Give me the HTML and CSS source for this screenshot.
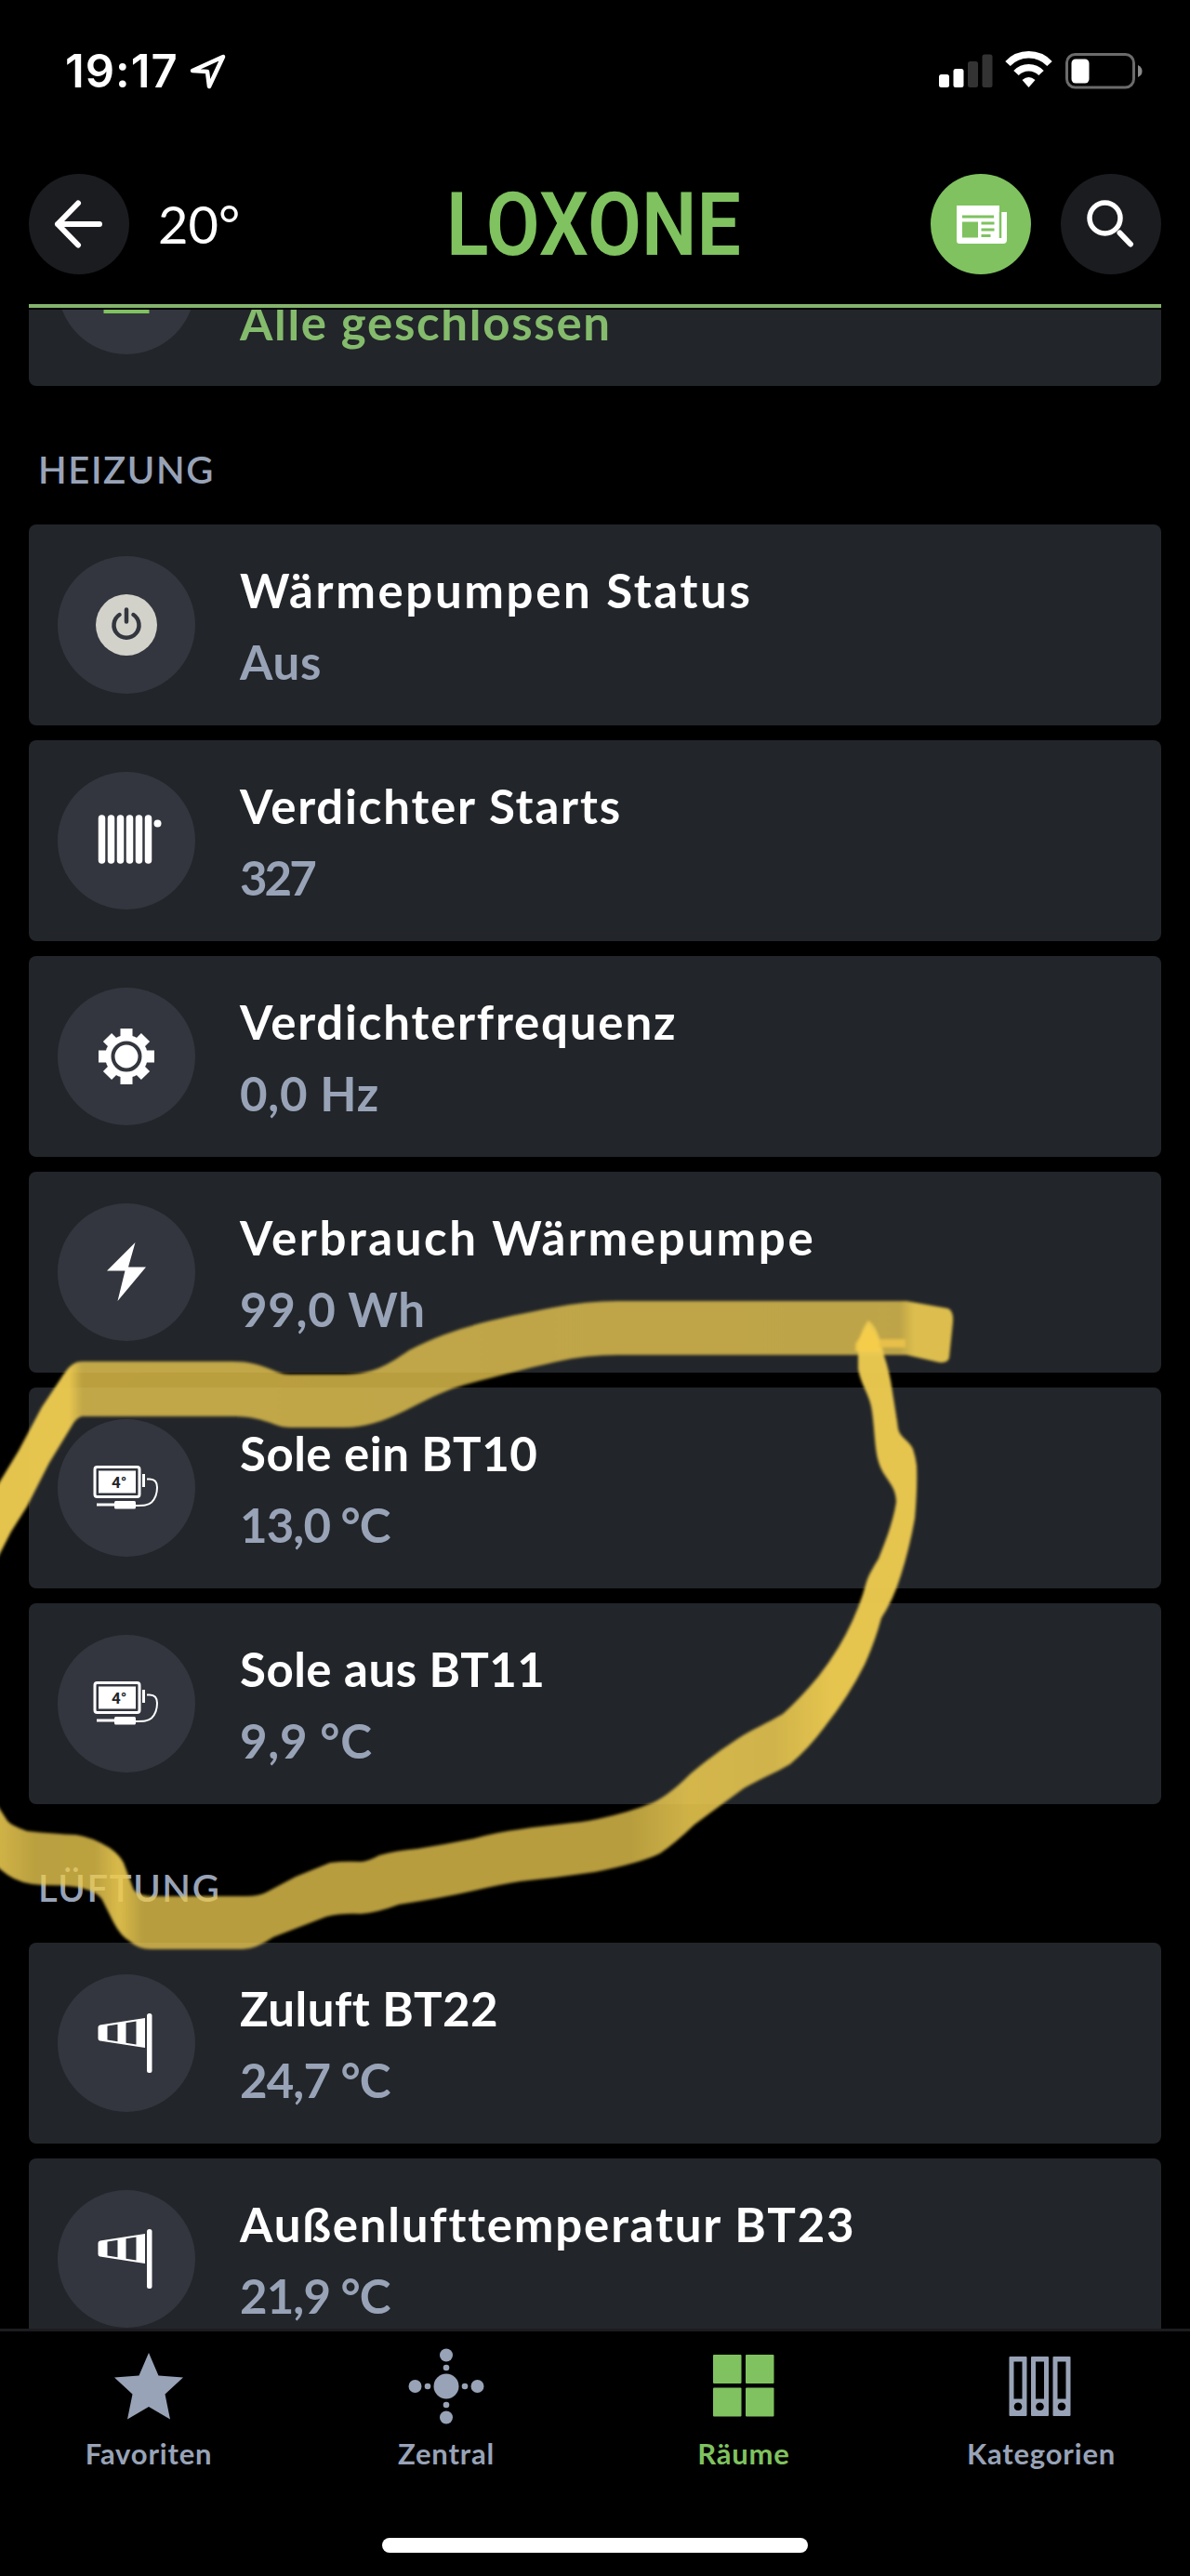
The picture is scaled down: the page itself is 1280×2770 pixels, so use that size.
FILE: index.html
```html
<!DOCTYPE html>
<html lang="de">
	<head>

		<meta charset="UTF-8">
		<title>Loxone</title>

		<link rel="stylesheet" href="styles.css">

	</head>
	<body>

		<!-- shared icons -->
		<svg class="defs">
			<symbol id="sensor" viewBox="0 0 148 148">
				<rect x="40" y="51.500" width="48" height="32" rx="2.500" fill="none" stroke="#fff" stroke-width="3"/>
				<rect x="44" y="55.500" width="40" height="24" fill="#fff"/>
				<text x="58" y="73.500" class="sensor-text">4°</text>
				<path d="M92.500 59v14" stroke="#fff" stroke-width="3"/>
				<path d="M96 64.500h3c6 0 8 4 8 9 0 7-2 12-6 16-4 3.500-8 3.500-18 3.500" fill="none" stroke="#fff" stroke-width="2"/>
				<path d="M42 92h22" stroke="#fff" stroke-width="3"/>
				<rect x="61" y="88" width="23" height="8.500" rx="1.500" fill="#fff"/>
			</symbol>
			<symbol id="windsock" viewBox="0 0 148 148">
				<path fill="#fff" fill-rule="evenodd" d="M45.500 54.500L94 47v32l-48.500-7.500q-2-.5-2-2.500V57q0-2 2-2.500zM53.500 55.500v15l11 1.800V53.700zM73.500 52.300v21.400l11 1.700V50.600z"/>
				<rect x="96" y="42" width="5.500" height="64" rx="2.500" fill="#fff"/>
			</symbol>
		</svg>

		<div class="screen">

			<div class="status-bar">
				<div class="status-left">
					<span class="time">19:17</span>
					<svg width="42" height="42" viewBox="0 0 42 42"><path d="M4 20L37 5 22 37 20 21z" fill="none" stroke="#fff" stroke-width="4.500" stroke-linejoin="round"/></svg>
				</div>
				<svg width="220" height="42" viewBox="0 0 220 42">
					<rect x="1" y="25" width="11" height="14" rx="2.500" fill="#fff"/>
					<rect x="16.500" y="19" width="11" height="20" rx="2.500" fill="#fff"/>
					<rect x="32" y="11" width="11" height="28" rx="2.500" fill="#333"/>
					<rect x="47.500" y="3.500" width="11" height="35.500" rx="2.500" fill="#333"/>
					<path d="M75 13.500a31 31 0 0 1 45 0" fill="none" stroke="#fff" stroke-width="7.500"/>
					<path d="M84 23.500a18.500 18.500 0 0 1 27 0" fill="none" stroke="#fff" stroke-width="7.500"/>
					<path d="M97.500 39l-7-8q7-6 14 0z" fill="#fff"/>
					<rect x="138.500" y="3.500" width="72" height="35.500" rx="9" fill="none" stroke="#6b6b6b" stroke-width="3"/>
					<rect x="143.500" y="8.500" width="19" height="26" rx="4.500" fill="#fff"/>
					<path d="M215 15q4.500 2 4.500 6.500t-4.500 6.500z" fill="#8a8a8a"/>
				</svg>
			</div>

			<header class="header">
				<div class="round-button">
					<svg width="108" height="108" viewBox="0 0 108 108"><path d="M76 54H31M53 31.500L31 54l22 22.500" fill="none" stroke="#fff" stroke-width="6" stroke-linecap="round" stroke-linejoin="round"/></svg>
				</div>
				<span class="temperature">20°</span>
				<svg class="logo" width="326" height="112" viewBox="0 0 326 112"><text x="2" y="89" textLength="317" lengthAdjust="spacingAndGlyphs">LOXONE</text></svg>
				<div class="round-button green">
					<svg width="108" height="108" viewBox="0 0 108 108">
						<path d="M28 34h46v7h8v30q0 4-4 4H31q-3 0-3-3z" fill="#fff"/>
						<path d="M34 46h34M54.500 53h14M54.500 60h14M54.500 66.500h10" stroke="#7fc25f" stroke-width="3"/>
						<path d="M34 51.500h17v17H34z" fill="#7fc25f"/>
						<path d="M75 41v28" stroke="#7fc25f" stroke-width="2.500"/>
					</svg>
				</div>
				<div class="round-button">
					<svg width="108" height="108" viewBox="0 0 108 108">
						<circle cx="47.500" cy="47.500" r="16.500" fill="none" stroke="#fff" stroke-width="5.500"/>
						<path d="M63.500 63.500l11.500 12" stroke="#fff" stroke-width="6" stroke-linecap="round"/>
					</svg>
				</div>
			</header>

			<main class="content">

				<div class="card cut">
					<div class="icon"><svg width="148" height="148" viewBox="0 0 148 148"><path d="M49.500 102h49" stroke="#7fc25f" stroke-width="4"/></svg></div>
					<div class="labels">
						<div class="value closed">Alle geschlossen</div>
					</div>
				</div>

				<h2>HEIZUNG</h2>

				<div class="card">
					<div class="icon"><svg width="148" height="148" viewBox="0 0 148 148">
						<circle cx="74" cy="74" r="33" fill="#d2d2cb"/>
						<path d="M66.500 63a13.500 13.500 0 1 0 15 0M74 57.500v13" fill="none" stroke="#33363e" stroke-width="4.500" stroke-linecap="round"/>
					</svg></div>
					<div class="labels">
						<div class="title wide">Wärmepumpen Status</div>
						<div class="value">Aus</div>
					</div>
				</div>

				<div class="card">
					<div class="icon"><svg width="148" height="148" viewBox="0 0 148 148">
						<path d="M47.500 50v45M57.500 50v45M67.500 50v45M77.500 50v45M87.500 50v45M97.500 50v45" stroke="#fff" stroke-width="7.500" stroke-linecap="round"/>
						<circle cx="107.500" cy="55.500" r="4" fill="#fff"/>
					</svg></div>
					<div class="labels">
						<div class="title">Verdichter Starts</div>
						<div class="value digits">327</div>
					</div>
				</div>

				<div class="card">
					<div class="icon"><svg width="148" height="148" viewBox="0 0 148 148">
						<circle cx="74" cy="74" r="23" fill="#fff"/>
						<path d="M74 44v60M44 74h60M53.500 53.500l41 41M94.500 53.500l-41 41" stroke="#fff" stroke-width="13"/>
						<circle cx="74" cy="74" r="14.500" fill="#fff" stroke="#33363e" stroke-width="4"/>
					</svg></div>
					<div class="labels">
						<div class="title">Verdichterfrequenz</div>
						<div class="value">0,0 Hz</div>
					</div>
				</div>

				<div class="card">
					<div class="icon"><svg width="148" height="148" viewBox="0 0 148 148"><path d="M83.500 42L76 68.500h19L64.500 105l8-32.500H53z" fill="#fff"/></svg></div>
					<div class="labels">
						<div class="title wide">Verbrauch Wärmepumpe</div>
						<div class="value">99,0 Wh</div>
					</div>
				</div>

				<div class="card">
					<div class="icon"><svg width="148" height="148"><use href="#sensor"/></svg></div>
					<div class="labels">
						<div class="title tight">Sole ein BT10</div>
						<div class="value narrow">13,0 °C</div>
					</div>
				</div>

				<div class="card">
					<div class="icon"><svg width="148" height="148"><use href="#sensor"/></svg></div>
					<div class="labels">
						<div class="title tight">Sole aus BT11</div>
						<div class="value">9,9 °C</div>
					</div>
				</div>

				<h2>LÜFTUNG</h2>

				<div class="card">
					<div class="icon"><svg width="148" height="148"><use href="#windsock"/></svg></div>
					<div class="labels">
						<div class="title tight">Zuluft BT22</div>
						<div class="value narrow">24,7 °C</div>
					</div>
				</div>

				<div class="card">
					<div class="icon"><svg width="148" height="148"><use href="#windsock"/></svg></div>
					<div class="labels">
						<div class="title">Außenlufttemperatur BT23</div>
						<div class="value narrow">21,9 °C</div>
					</div>
				</div>

			</main>

			<nav class="tabs">
				<div class="tab">
					<svg width="84" height="84" viewBox="0 0 84 84"><path d="M42 6l10.500 24.500L79 32.500 59.500 50.500 65 77.500 42 64 19 77.500 24.500 50.500 5 32.500l26.500-2z" fill="#98a3b7"/></svg>
					<span>Favoriten</span>
				</div>
				<div class="tab">
					<svg width="84" height="84" viewBox="0 0 84 84" fill="#98a3b7">
						<circle cx="42" cy="42" r="13.500"/>
						<circle cx="22" cy="42" r="3.300"/><circle cx="62" cy="42" r="3.300"/>
						<circle cx="42" cy="22" r="3.300"/><circle cx="42" cy="62" r="3.300"/>
						<circle cx="8.500" cy="42" r="7"/><circle cx="75.500" cy="42" r="7"/>
						<circle cx="42" cy="8.500" r="7"/><circle cx="42" cy="75.500" r="7"/>
					</svg>
					<span>Zentral</span>
				</div>
				<div class="tab active">
					<svg width="84" height="84" viewBox="0 0 84 84" fill="#7fc25f">
						<rect x="9" y="8" width="30.500" height="31" rx="1"/><rect x="44" y="8" width="30.500" height="31" rx="1"/>
						<rect x="9" y="43.500" width="30.500" height="31" rx="1"/><rect x="44" y="43.500" width="30.500" height="31" rx="1"/>
					</svg>
					<span>Räume</span>
				</div>
				<div class="tab">
					<svg width="84" height="84" viewBox="0 0 84 84" fill="#98a3b7" fill-rule="evenodd">
						<path id="binder" d="M8.500 10h17q1 0 1 1v62q0 1-1 1h-17q-1 0-1-1V11q0-1 1-1zM12.500 15.500v40h9v-40zM17 59.500a4.300 4.300 0 1 0 .01 0z"/>
						<use href="#binder" x="23.500"/>
						<use href="#binder" x="47"/>
					</svg>
					<span>Kategorien</span>
				</div>
			</nav>
			<div class="home-bar"></div>

			<!-- marker drawing over the list -->
			<svg class="marker" width="1280" height="2770" viewBox="0 0 1280 2770">
				<defs>
					<linearGradient id="upper" gradientUnits="userSpaceOnUse" x1="0" y1="0" x2="1280" y2="0">
						<stop offset="0" stop-color="#ecca50" stop-opacity=".97"/>
						<stop offset=".058" stop-color="#ecca50" stop-opacity=".97"/>
						<stop offset=".069" stop-color="#ecca50" stop-opacity=".79"/>
						<stop offset=".756" stop-color="#ecca50" stop-opacity=".77"/>
						<stop offset=".768" stop-color="#ecca50" stop-opacity=".92"/>
						<stop offset="1" stop-color="#ecca50" stop-opacity=".92"/>
					</linearGradient>
					<linearGradient id="lower" gradientUnits="userSpaceOnUse" x1="0" y1="0" x2="1280" y2="0">
						<stop offset="0" stop-color="#ecca50" stop-opacity=".88"/>
						<stop offset=".03" stop-color="#ecca50" stop-opacity=".79"/>
						<stop offset=".08" stop-color="#ecca50" stop-opacity=".8"/>
						<stop offset=".1" stop-color="#ecca50" stop-opacity=".92"/>
						<stop offset=".12" stop-color="#ecca50" stop-opacity=".78"/>
						<stop offset=".53" stop-color="#ecca50" stop-opacity=".78"/>
						<stop offset=".58" stop-color="#ecca50" stop-opacity=".88"/>
						<stop offset=".65" stop-color="#ecca50" stop-opacity=".86"/>
						<stop offset=".7" stop-color="#ecca50" stop-opacity=".97"/>
						<stop offset="1" stop-color="#ecca50" stop-opacity=".97"/>
					</linearGradient>
					<filter id="soft" x="-5%" y="-5%" width="110%" height="110%"><feGaussianBlur stdDeviation="1.500"/></filter>
				</defs>
				<g filter="url(#soft)">
					<path fill="url(#upper)" d="M-10 1610L0 1593L20 1560L45 1513L69 1477Q77 1464 88 1464H250C285 1464 295 1478 312 1478H370C405 1478 425 1462 440 1452C490 1425 550 1415 595 1406Q630 1399 665 1399H975L1020 1407Q1026 1410 1025 1422L1021 1460Q1020 1466 1010 1465L975 1457H665Q630 1457 600 1464C560 1473 530 1481 500 1489C450 1503 420 1535 370 1535H312C295 1535 285 1523 250 1523H88Q82 1525 78 1532L53 1573L29 1620L12 1647L-10 1690z"/>
					<path fill="url(#lower)" d="M934 1420Q927 1428 923 1445V1472C926 1490 936 1500 938 1518C941 1540 941 1560 945 1572C950 1590 964 1596 964 1615C960 1640 951 1660 945 1676C939 1686 935 1692 932 1701Q925 1728 910 1757Q898 1780 880 1803Q860 1827 842 1843C825 1853 810 1859 793 1870Q768 1886 743 1907Q720 1930 703 1938Q680 1948 643 1956C620 1961 590 1962 560 1967Q535 1970 510 1977Q480 1983 449 1988Q425 1990 408 1995Q395 2002 388 2002Q370 2001 355 2003L318 2018L286 2035Q278 2039 265 2039H163Q146 2038 143 2030L133 2003Q128 1994 118 1987Q98 1975 82 1973Q60 1972 29 1969Q12 1963 8 1958L-10 1930V2000Q-3 2008 8 2016Q22 2026 45 2027Q70 2027 82 2029Q104 2033 110 2043L122 2067Q130 2082 139 2087Q148 2096 163 2096H261Q275 2096 294 2083L351 2061Q368 2057 388 2058Q405 2057 429 2048Q475 2041 510 2033Q540 2026 560 2023Q600 2019 640 2013Q690 2003 710 1993Q725 1983 747 1962Q770 1945 800 1923C817 1913 833 1907 850 1897Q870 1880 887 1857Q913 1824 930 1790Q941 1766 948 1740Q961 1720 969 1694Q978 1666 984 1633Q987 1600 986 1576Q985 1567 982 1558C977 1548 968 1546 966 1536C964 1520 962 1510 960 1497Q957 1475 951 1458Q945 1427 934 1420z"/>
					<path fill="#f7ce4b" fill-opacity=".8" d="M934 1425L920 1445V1453H948L944 1440z"/>
					<path fill="#e6c04a" d="M946 1440h28v9h-28z"/>
				</g>
			</svg>

		</div>

	</body>
</html>
```
FILE: styles.css
```css
/* all */
* {
	box-sizing: border-box;
	margin: 0;
	padding: 0;
}

body {
	background: #000;
	color: #fff;
	font-family: Lato, "Liberation Sans", sans-serif;
}

svg {
	display: block;
	flex: none;
}

.defs {
	position: absolute;
	width: 0;
	height: 0;
}

.screen {
	position: relative;
	display: flex;
	flex-direction: column;
	width: 1280px;
	height: 2770px;
	overflow: hidden;
}

/* status bar */
.status-bar {
	display: flex;
	justify-content: space-between;
	height: 186px;
	padding: 55px 51px 0 70px;
}

.status-left {
	display: flex;
	gap: 11px;
	height: 44px;
	align-items: center;
}

.time {
	font: 600 49px/60px Inter, sans-serif;
	letter-spacing: 1px;
}

/* header */
.header {
	display: flex;
	align-items: center;
	height: 145px;
	margin: 0 31px;
	padding-bottom: 32px;
	border-bottom: 4px solid #84b36c;
}

.round-button {
	flex: none;
	width: 108px;
	height: 108px;
	border-radius: 50%;
	background: #1b1c20;
}

.round-button + .round-button {
	margin-left: 32px;
}

.round-button.green {
	background: #7fc25f;
}

.temperature {
	flex: none;
	width: 339px;
	padding-left: 31px;
	font-size: 56px;
}

.logo {
	margin: 0 auto 0 0;
}

.logo text {
	font: 600 94px Roboto, sans-serif;
	fill: #7fc25f;
}

/* list */
.content {
	display: flex;
	flex: none;
	flex-direction: column;
	gap: 16px;
	height: 2171px;
	margin-top: 2px;
	padding: 0 31px;
	overflow: hidden;
}

.card {
	display: flex;
	flex: none;
	align-items: center;
	height: 216px;
	padding-left: 31px;
	border-radius: 8px;
	background: #222529;
}

.card.cut {
	margin-top: -134px;
}

.icon {
	flex: none;
	width: 148px;
	height: 148px;
	border-radius: 50%;
	background: #33363e;
}

.labels {
	margin-left: 48px;
	padding-top: 1px;
}

.title,
.value {
	font-size: 51px;
	font-weight: 700;
	line-height: 77px;
	letter-spacing: 1.8px;
	white-space: nowrap;
}

/* letter spacing per kind of text */
.title.wide {
	letter-spacing: 2.6px;
}

.title.tight {
	letter-spacing: 0.5px;
}

.value {
	letter-spacing: 0.7px;
	color: #98a3b7;
}

.value.narrow {
	letter-spacing: -0.9px;
}

.value.digits {
	letter-spacing: -3px;
}

.value.closed {
	margin-top: 77px;
	letter-spacing: 1.7px;
	color: #84bb6c;
}

h2 {
	flex: none;
	height: 117px;
	padding-left: 10px;
	font-size: 40px;
	font-weight: 600;
	line-height: 149px;
	letter-spacing: 1.6px;
	color: #98a3b7;
}

.sensor-text {
	font: bold 17px Roboto, sans-serif;
	fill: #222529;
}

/* bottom tabs */
.tabs {
	display: flex;
	flex: none;
	height: 225px;
	border-top: 3px solid #1c1c20;
}

.tab {
	display: flex;
	flex: 1;
	flex-direction: column;
	align-items: center;
	padding-top: 17px;
	font-size: 31px;
	font-weight: 700;
	line-height: 40px;
	letter-spacing: 0.8px;
	color: #98a3b7;
}

.tab span {
	margin-top: 10px;
}

.tab.active {
	color: #7fc25f;
}

.home-bar {
	flex: none;
	width: 458px;
	height: 16px;
	margin: 0 auto;
	border-radius: 8px;
	background: #fff;
}

/* marker */
.marker {
	position: absolute;
	top: 0;
	left: 0;
}
```
